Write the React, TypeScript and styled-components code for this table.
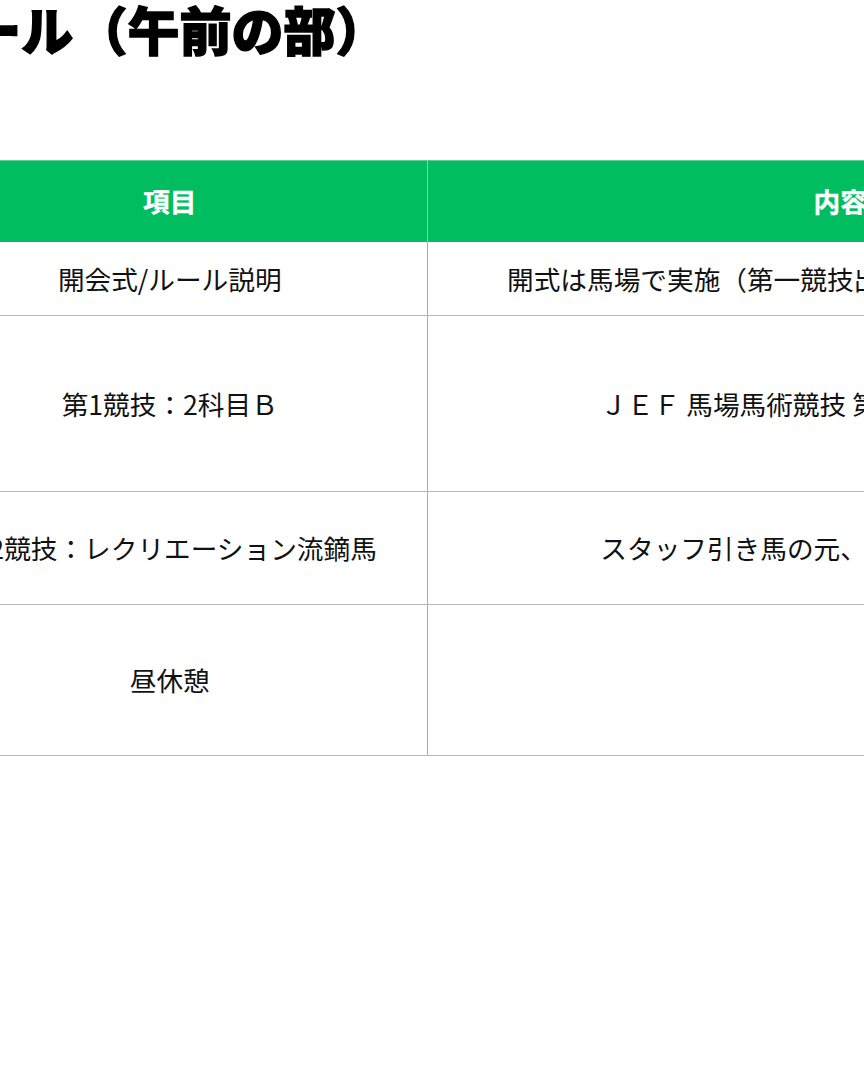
import React from "react";
import styled, { createGlobalStyle } from "styled-components";

const Global = createGlobalStyle`
  html, body {
    margin: 0;
    padding: 0;
    background: #ffffff;
    overflow: hidden;
  }
  body {
    font-family: "Noto Sans CJK JP", "Noto Sans", sans-serif;
    color: #111111;
  }
`;

const Page = styled.main`
  width: 1600px;
  margin-left: -235px;
  padding-top: 3px;
`;

const Title = styled.h1`
  margin: 0;
  font-family: "Noto Sans CJK JP", sans-serif;
  font-weight: 900;
  font-size: 52px;
  line-height: 1;
  color: #000000;
  white-space: nowrap;
  -webkit-text-stroke: 1.4px #000000;
`;

const TitleNote = styled.span`
  margin-left: 2px;
`;

const Table = styled.table`
  margin: 105px 0 0 148px;
  width: 1340px;
  border-collapse: collapse;
  table-layout: fixed;
  font-family: "Noto Sans CJK JP", sans-serif;
`;

const HeadCell = styled.th`
  height: 81px;
  padding: 0;
  background: #00bd5f;
  color: #ffffff;
  font-size: 26.67px;
  font-weight: 700;
  line-height: 1.3;
  text-align: center;
  vertical-align: middle;
  border-left: 1px solid #7fd4a8;
  border-top: 1px solid #5fcf92;
  -webkit-text-stroke: 0.4px #ffffff;
  &:first-child {
    border-left: none;
  }
`;

const Cell = styled.td<{ $h: number }>`
  height: ${(p) => p.$h}px;
  padding: 0;
  font-size: 26.67px;
  font-weight: 400;
  line-height: 1.4;
  color: #111111;
  text-align: center;
  vertical-align: middle;
  white-space: nowrap;
  border-bottom: 1px solid #b8b8b8;
  border-left: 1px solid #a8a8a8;
  &:first-child {
    border-left: none;
  }
`;

const rows: { item: string; detail: string; h: number }[] = [
  {
    item: "開会式/ルール説明",
    detail: "開式は馬場で実施（第一競技出場者は騎乗のまま参加）",
    h: 73,
  },
  {
    item: "第1競技：2科目Ｂ",
    detail: "ＪＥＦ 馬場馬術競技 第2科目Ｂに準ずる",
    h: 175,
  },
  {
    item: "第2競技：レクリエーション流鏑馬",
    detail: "スタッフ引き馬の元、流鏑馬体験を実施",
    h: 112,
  },
  { item: "昼休憩", detail: "", h: 150 },
];

export default function App() {
  return (
    <>
      <Global />
      <Page>
        <Title>
          スケジュール<TitleNote>（午前の部）</TitleNote>
        </Title>
        <Table>
          <colgroup>
            <col style={{ width: 514 }} />
            <col />
          </colgroup>
          <thead>
            <tr>
              <HeadCell>項目</HeadCell>
              <HeadCell>内容</HeadCell>
            </tr>
          </thead>
          <tbody>
            {rows.map((r) => (
              <tr key={r.item}>
                <Cell $h={r.h}>{r.item}</Cell>
                <Cell $h={r.h}>{r.detail}</Cell>
              </tr>
            ))}
          </tbody>
        </Table>
      </Page>
    </>
  );
}
